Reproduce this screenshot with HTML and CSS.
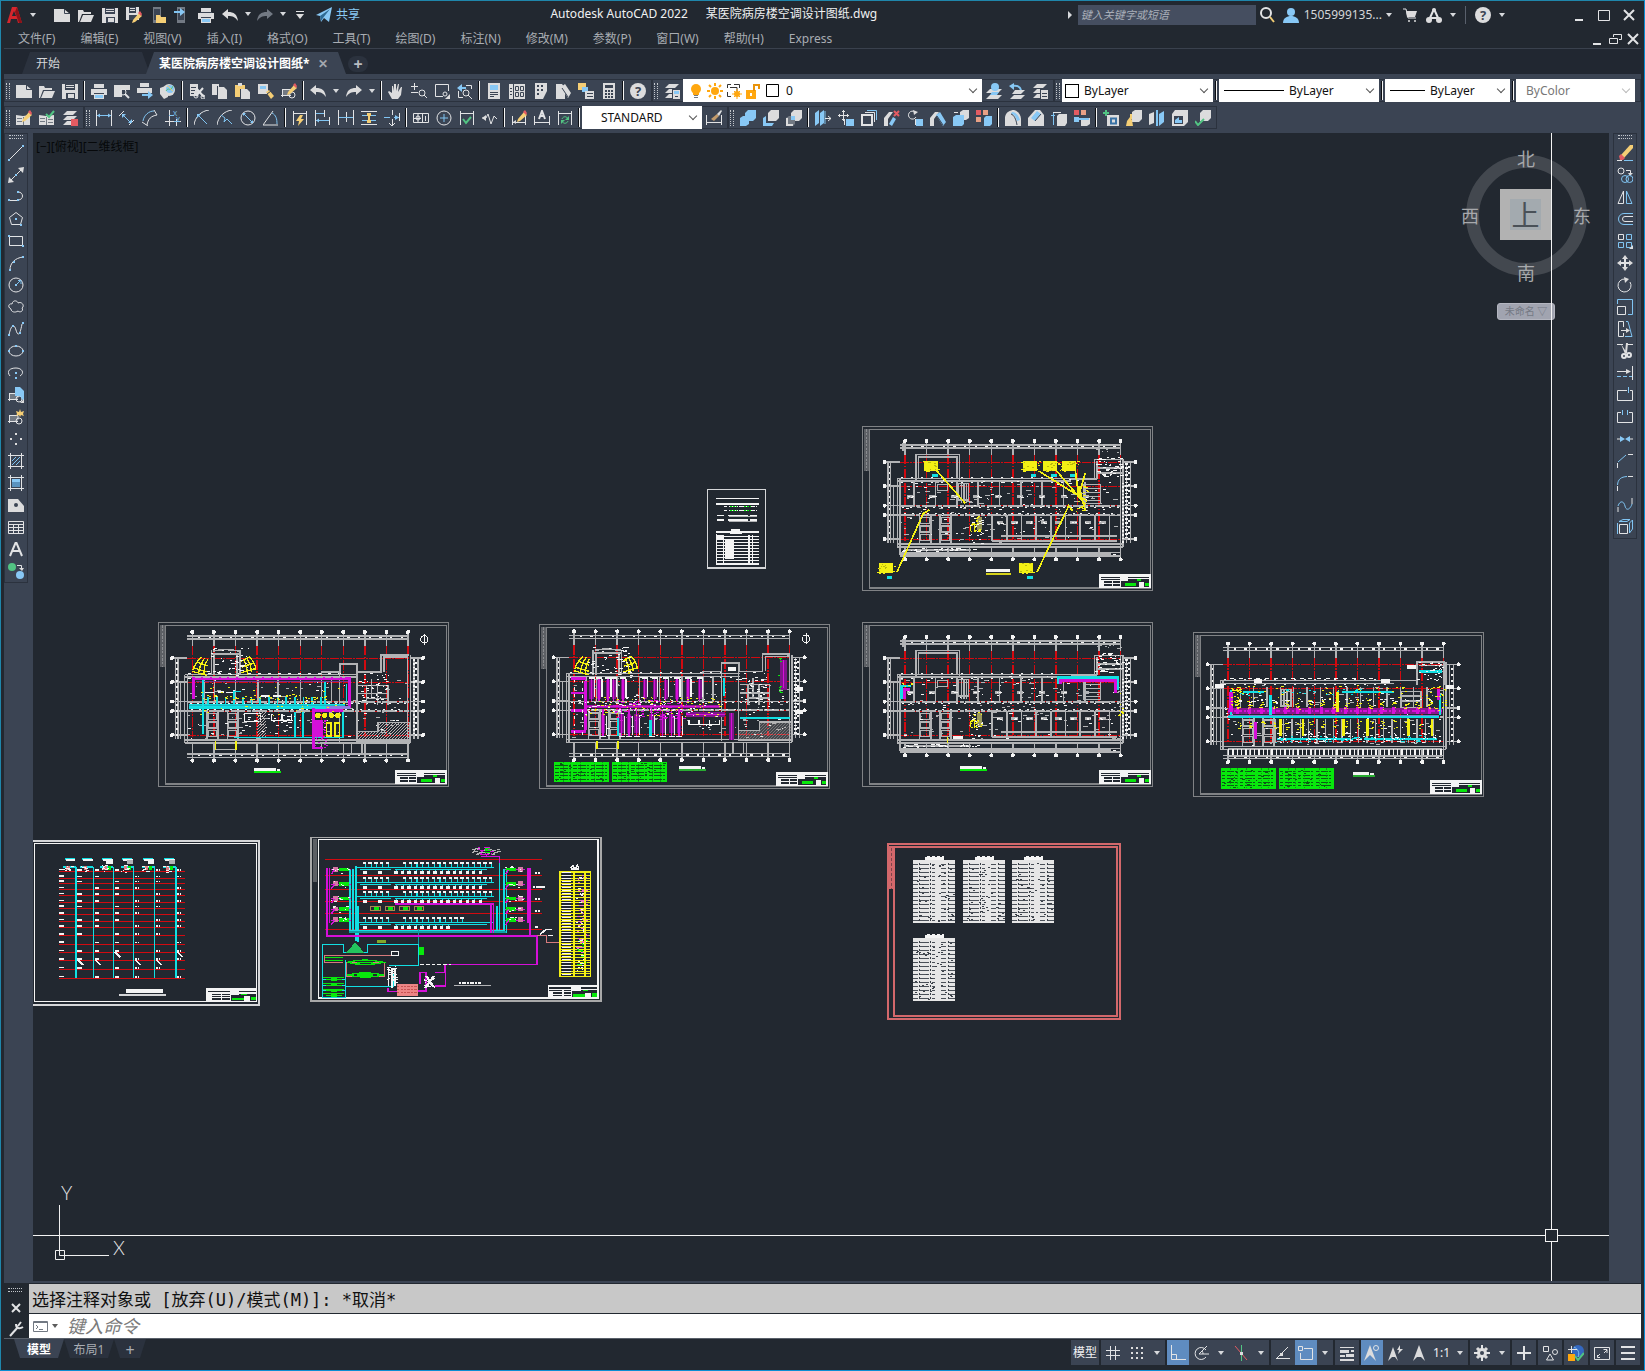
FILE: index.html
```html
<!DOCTYPE html>
<html lang="zh">
<head>
  <meta charset="UTF-8">
  <meta name="viewport" content="width=device-width, initial-scale=1.0">
  <title>Autodesk AutoCAD 2022</title>
  <link rel="stylesheet" href="styles.css">
</head>
<body>
  <div class="window">
    <header class="titlebar">
      <button class="logo" aria-label="应用程序菜单" data-icon="logo"></button>
      <button class="drop" aria-label="展开应用程序菜单"></button>
      <div class="quick" data-tools="quick"></div>
      <button class="share"><span data-icon="plane"></span>共享</button>
      <h1 class="title"><span>Autodesk AutoCAD 2022</span><span>某医院病房楼空调设计图纸.dwg</span></h1>
      <div class="account">
        <span class="play"></span>
        <input class="search" type="text" aria-label="搜索" placeholder="键入关键字或短语">
        <button class="icon-btn" aria-label="查找" data-icon="search"></button>
        <button class="user"><span data-icon="user"></span>1505999135...</button>
        <button class="drop" aria-label="帐户"></button>
        <button class="icon-btn" aria-label="购物车" data-icon="cart"></button>
        <button class="icon-btn" aria-label="应用" data-icon="apps"></button>
        <button class="drop" aria-label="更多应用"></button>
        <span class="rule"></span>
        <button class="icon-btn" aria-label="帮助" data-icon="help"></button>
        <button class="drop" aria-label="更多帮助"></button>
      </div>
      <div class="win-btns">
        <button aria-label="最小化" data-icon="min"></button>
        <button aria-label="最大化" data-icon="max"></button>
        <button aria-label="关闭" data-icon="close"></button>
      </div>
    </header>

    <nav class="menubar">
      <a href="#">文件(F)</a>
      <a href="#">编辑(E)</a>
      <a href="#">视图(V)</a>
      <a href="#">插入(I)</a>
      <a href="#">格式(O)</a>
      <a href="#">工具(T)</a>
      <a href="#">绘图(D)</a>
      <a href="#">标注(N)</a>
      <a href="#">修改(M)</a>
      <a href="#">参数(P)</a>
      <a href="#">窗口(W)</a>
      <a href="#">帮助(H)</a>
      <a href="#">Express</a>
      <div class="doc-btns">
        <button aria-label="最小化图形" data-icon="min"></button>
        <button aria-label="还原图形" data-icon="restore"></button>
        <button aria-label="关闭图形" data-icon="close"></button>
      </div>
    </nav>

    <div class="file-tabs">
      <button class="file-tab">开始</button>
      <div class="file-tab active">
        <button class="tab-name">某医院病房楼空调设计图纸*</button>
        <button class="tab-close" aria-label="关闭选项卡">✕</button>
      </div>
      <button class="tab-add" aria-label="新图形">+</button>
    </div>

    <div class="toolbars">
      <div class="tool-row">
        <div class="bar" data-tools="standard"></div>
        <div class="bar">
          <span class="grip"></span>
          <button class="tool" aria-label="图层特性" data-icon="layerprops"></button>
          <div class="combo layer">
            <span class="combo-pre" data-tools="layerstate"></span>
            <select aria-label="图层"><option>0</option></select>
          </div>
          <button class="tool" aria-label="置为当前" data-icon="layercur"></button>
          <button class="tool" aria-label="上一个图层" data-icon="layerprev"></button>
          <button class="tool" aria-label="图层状态" data-icon="layerlist"></button>
        </div>
        <div class="bar props">
          <span class="grip"></span>
          <div class="combo color">
            <span class="combo-pre"><i class="swatch"></i></span>
            <select aria-label="颜色"><option>ByLayer</option></select>
          </div>
          <span class="sep"></span>
          <div class="combo ltype">
            <span class="combo-pre"><i class="line"></i></span>
            <select aria-label="线型"><option>ByLayer</option></select>
          </div>
          <span class="sep"></span>
          <div class="combo lweight">
            <span class="combo-pre"><i class="line"></i></span>
            <select aria-label="线宽"><option>ByLayer</option></select>
          </div>
          <span class="sep"></span>
          <div class="combo plot">
            <select aria-label="打印样式" disabled><option>ByColor</option></select>
          </div>
        </div>
      </div>
      <div class="tool-row">
        <div class="bar" data-tools="refedit"></div>
        <div class="bar">
          <div class="group" data-tools="dimension"></div>
          <div class="combo dimstyle">
            <select aria-label="标注样式"><option>STANDARD</option></select>
          </div>
          <button class="tool" aria-label="标注样式管理" data-icon="dimstyle"></button>
        </div>
        <div class="bar" data-tools="solids"></div>
      </div>
    </div>

    <div class="workspace">
      <aside class="dock"><div class="bar vertical" data-tools="draw"></div></aside>
      <main class="canvas">
        <div class="view-label">[−][俯视][二维线框]</div>

        <svg class="sheet s-cover" id="cover" viewBox="0 0 177 241"></svg>
        <svg class="sheet s-roof" id="roof" viewBox="0 0 873 495"></svg>
        <svg class="sheet s-floor1" id="floor1" viewBox="0 0 873 495"></svg>
        <svg class="sheet s-floor2" id="floor2" viewBox="0 0 873 495"></svg>
        <svg class="sheet s-floor3" id="floor3" viewBox="0 0 873 495"></svg>
        <svg class="sheet s-floor4" id="floor4" viewBox="0 0 873 495"></svg>
        <svg class="sheet s-riser" id="riser" viewBox="34 43 593 498" preserveAspectRatio="none"></svg>
        <svg class="sheet s-system" id="system" viewBox="758 30 764 498" preserveAspectRatio="none"></svg>
        <svg class="sheet s-tables" id="tables" viewBox="0 0 234 177"></svg>

        <div class="viewcube">
          <div class="ring"></div>
          <button class="face">上</button>
          <span class="dir north">北</span>
          <span class="dir south">南</span>
          <span class="dir west">西</span>
          <span class="dir east">东</span>
          <button class="ucs-name">未命名 <span>▽</span></button>
        </div>

        <svg class="ucs" viewBox="0 0 80 80">
          <path class="ucs-line" d="M5.500 17V67.500H55M1.500 62.500h9v9h-9z"/>
          <text x="7" y="12">Y</text>
          <text x="59" y="67">X</text>
        </svg>

        <div class="cross-v"></div>
        <div class="cross-h"></div>
        <div class="pickbox"></div>
      </main>
      <aside class="dock right"><div class="bar vertical" data-tools="modify"></div></aside>
    </div>

    <div class="command">
      <div class="cmd-side">
        <span class="grip across"></span>
        <button aria-label="关闭命令行" data-icon="closesm"></button>
        <button aria-label="自定义" data-icon="wrench"></button>
      </div>
      <div class="cmd-main">
        <div class="cmd-history">选择注释对象或 [放弃(U)/模式(M)]: *取消*</div>
        <div class="cmd-line">
          <span class="cmd-prompt" data-icon="prompt"></span>
          <button class="drop" aria-label="最近使用的命令"></button>
          <input type="text" aria-label="命令" placeholder="键入命令">
        </div>
      </div>
    </div>

    <footer class="statusbar">
      <div class="layouts">
        <button class="layout active">模型</button>
        <button class="layout">布局1</button>
        <button class="layout add" aria-label="新建布局">+</button>
      </div>
      <div class="status" data-status></div>
    </footer>
  </div>
  <script src="script.js"></script>
</body>
</html>
```
FILE: styles.css
```css
* {
  box-sizing: border-box;
}

body {
  margin: 0;
  font-family: "Noto Sans", "Noto Sans CJK SC", sans-serif;
  font-size: 12px;
  line-height: 16px;
  color: #d4d6d9;
  background: #222830;
}

button,
input,
select {
  font: inherit;
  color: inherit;
  margin: 0;
  padding: 0;
  border: 0;
  background: none;
}

a {
  color: inherit;
  text-decoration: none;
}

svg {
  display: block;
}

.window {
  display: flex;
  flex-direction: column;
  height: 100vh;
  min-height: 700px;
  padding: 0 3px;
  border: 1px solid #1f86ab;
  border-right-color: #0b8ed3;
  border-bottom-color: #0b8ed3;
  background: #222830;
}

/* icon strokes and fills */
.w, .b, .g, .k, .r, .y, .s { fill: none; stroke-width: 1; }
.w { stroke: #e2e3e5; }
.b { stroke: #80c4f2; }
.g { stroke: #52c483; }
.k { stroke: #3b4453; }
.r { stroke: #e35b62; }
.y { stroke: #f2cd73; }
.s { stroke: #727983; }
.W { fill: #dcdcdd; }
.B { fill: #88c8f5; }
.G { fill: #52c483; }
.K { fill: #3b4453; }
.R { fill: #e35b62; }
.Y { fill: #f5ce75; }
.O { fill: #ffa70f; }
.S { fill: #727983; }
.t2 { stroke-width: 2; }

/* title bar */
.titlebar {
  display: flex;
  align-items: center;
  height: 27px;
  padding-left: 3px;
  flex: none;
}

.logo {
  width: 19px;
}

.drop {
  width: 14px;
  height: 20px;
  display: flex;
  align-items: center;
  justify-content: center;
}

.drop::after {
  content: "";
  border: 3px solid transparent;
  border-top: 4px solid #d7d9dc;
  border-bottom: 0;
}

.titlebar > .drop {
  margin-right: 10px;
}

.quick {
  display: flex;
}

.quick .tool {
  width: 24px;
}

.quick .drop {
  width: 11px;
}

.share {
  display: flex;
  align-items: center;
  gap: 4px;
  margin-left: 4px;
  color: #8acbf5;
}

.title {
  flex: 1;
  display: flex;
  justify-content: center;
  gap: 18px;
  margin: 0 0 1px;
  font-size: 12px;
  line-height: 16px;
  font-weight: normal;
  color: #f0f1f2;
}

.account {
  display: flex;
  align-items: center;
}

.play {
  border: 4px solid transparent;
  border-left-color: #d7d9dc;
  border-right: 0;
  margin-right: 6px;
}

.search {
  width: 178px;
  height: 20px;
  padding: 0 3px;
  font-size: 11px;
  font-style: italic;
  background: #454e60;
}

.search::placeholder {
  color: #a9afb9;
  opacity: 1;
}

.icon-btn {
  width: 24px;
  display: flex;
  justify-content: center;
}

.user {
  display: flex;
  align-items: center;
  gap: 5px;
  padding-left: 3px;
}

.user + .drop {
  margin-right: 2px;
}

.rule {
  width: 1px;
  height: 18px;
  margin: 0 5px;
  background: #59606c;
}

.win-btns {
  display: flex;
  gap: 9px;
  margin: 0 4px 0 62px;
}

/* menu */
.menubar {
  display: flex;
  align-items: center;
  gap: 25px;
  height: 21px;
  flex: none;
  padding: 1px 0 0 14px;
  color: #a9adb3;
  border-bottom: 1px solid #3a414d;
}

.doc-btns {
  display: flex;
  gap: 2px;
  margin: 0 0 0 auto;
}

/* drawing tabs */
.file-tabs {
  display: flex;
  align-items: flex-end;
  height: 25px;
  flex: none;
  padding-left: 18px;
  background: #212731;
}

.file-tab {
  display: flex;
  align-items: center;
  height: 22px;
  width: 128px;
  padding: 2px 0 0 14px;
  background: #2b323e;
  clip-path: polygon(8px 0, calc(100% - 8px) 0, 100% 100%, 0 100%);
  border-radius: 6px 6px 0 0;
  text-align: left;
}

.file-tab.active {
  width: 200px;
  padding-left: 13px;
  gap: 8px;
  margin-left: -4px;
  background: #3b4453;
  color: #fff;
}

.tab-name {
  font-weight: bold;
  white-space: nowrap;
}

.tab-close {
  color: #a4a8af;
  font-weight: bold;
}

.tab-add {
  width: 20px;
  height: 16px;
  margin: 0 0 2px 2px;
  border-radius: 8px;
  background: #2b323e;
  color: #b9bcc1;
  font-size: 16px;
  line-height: 16px;
  font-weight: bold;
}

/* toolbars */
.toolbars {
  display: flex;
  flex-direction: column;
  gap: 4px;
  flex: none;
  padding: 5px 0 4px;
  background: #3b4453;
}

.tool-row,
.bar,
.group {
  display: flex;
  align-items: center;
}

.bar {
  height: 23px;
  padding-right: 3px;
  box-shadow: inset 0 0 0 1px #2b323e;
}

.grip {
  width: 4px;
  height: 16px;
  margin: 0 2px;
  border: dotted #c3c7cc;
  border-width: 0 1px;
}

.tool {
  width: 23px;
  height: 22px;
  display: flex;
  align-items: center;
  justify-content: center;
  flex: none;
}

.bar .drop {
  width: 13px;
}

.sep {
  width: 2px;
  height: 19px;
  margin: 0 2px;
  border-left: 1px solid #0c0f14;
  border-right: 1px solid #f4f4f4;
}

.combo {
  position: relative;
  display: flex;
  height: 23px;
  color: #111;
  background: #fff;
}

.combo::after {
  content: "";
  position: absolute;
  right: 6px;
  top: 7px;
  width: 5px;
  height: 5px;
  border: solid #555;
  border-width: 0 1px 1px 0;
  transform: rotate(45deg);
}

.combo select {
  appearance: none;
  flex: 1;
  width: 100%;
  padding-left: 5px;
}

.combo-pre {
  display: flex;
  align-items: center;
  padding-left: 3px;
}

.combo-pre .tool {
  width: 19px;
}

.layer { width: 299px; }
.color { width: 151px; }
.ltype { width: 160px; }
.lweight { width: 125px; }
.plot { flex: 1; }
.dimstyle { width: 120px; }
.dimstyle select { padding-left: 19px; }
.plot select { padding-left: 10px; color: #777; opacity: 1; }
.plot::after { border-color: #bbb; }

.props {
  flex: 1;
  padding-right: 6px;
}

.swatch {
  width: 14px;
  height: 14px;
  border: 1px solid #000;
}

.line {
  width: 60px;
  height: 1px;
  margin-left: 2px;
  background: #000;
}

.lweight .line {
  width: 35px;
}

/* workspace */
.workspace {
  display: flex;
  flex: 1;
  min-height: 0;
  border-bottom: 2px solid #3b4453;
}

.dock {
  width: 29px;
  background: #3b4453;
  flex: none;
}

.dock.right {
  width: 32px;
  padding-left: 4px;
}

.bar.vertical {
  flex-direction: column;
  width: 24px;
  height: auto;
  padding: 2px 0 1px;
}

.grip.across,
.bar.vertical .grip {
  width: 14px;
  height: 4px;
  margin: 0 0 3px;
  border-width: 1px 0;
}

.canvas {
  position: relative;
  flex: 1;
  overflow: hidden;
  background: #222830;
}

.view-label {
  padding: 6px 3px;
  font-size: 12px;
  color: #06080a;
}

.sheet {
  position: absolute;
  width: 291px;
  height: 165px;
  shape-rendering: crispEdges;
}

.s-cover { left: 674px; top: 356px; width: 59px; height: 80px; }
.s-roof { left: 829px; top: 293px; }
.s-floor1 { left: 125px; top: 489px; }
.s-floor2 { left: 506px; top: 491px; }
.s-floor3 { left: 829px; top: 489px; }
.s-floor4 { left: 1160px; top: 499px; }
.s-riser { left: 0; top: 707px; width: 227px; height: 166px; }
.s-system { left: 277px; top: 703px; width: 292px; height: 166px; }
.s-tables { left: 854px; top: 710px; width: 234px; height: 177px; }

.viewcube {
  position: absolute;
  top: 17px;
  right: 18px;
  width: 130px;
  height: 175px;
  color: #a7a9ac;
  font-size: 18px;
}

.ring {
  position: absolute;
  left: 5px;
  top: 5px;
  width: 121px;
  height: 121px;
  border: 13px solid #43484f;
  border-radius: 50%;
}

.face {
  position: absolute;
  left: 39px;
  top: 39px;
  width: 51px;
  height: 51px;
  font-size: 28px;
  line-height: 30px;
  color: #4a5158;
  background: #a3aaaf;
  border: 10px solid #b2b2b2;
  display: flex;
  align-items: center;
  justify-content: center;
}

.dir {
  position: absolute;
  line-height: 20px;
}

.north { left: 56px; top: -1px; }
.south { left: 56px; top: 113px; }
.west { left: 0; top: 56px; }
.east { right: 0; top: 56px; }

.ucs-name {
  position: absolute;
  left: 36px;
  top: 153px;
  width: 58px;
  height: 17px;
  border-radius: 3px;
  font-size: 10px;
  line-height: 15px;
  color: #747984;
  background: #a1a4b0;
  border: 1px solid #b4b6c0;
}

.ucs {
  position: absolute;
  left: 21px;
  bottom: 13px;
  width: 80px;
  height: 80px;
  overflow: visible;
}

.ucs text {
  fill: #e6e7e8;
  font-family: Lato, sans-serif;
  font-weight: 300;
  font-size: 19px;
}

.ucs-line {
  fill: none;
  stroke: #f0f0f0;
}

.cross-v {
  position: absolute;
  right: 57px;
  top: 0;
  bottom: 0;
  width: 1px;
  background: #f4f4f4;
}

.cross-h {
  position: absolute;
  left: 0;
  right: 0;
  bottom: 45px;
  height: 1px;
  background: #f4f4f4;
}

.pickbox {
  position: absolute;
  right: 51px;
  bottom: 39px;
  width: 13px;
  height: 13px;
  border: 1px solid #f4f4f4;
  background: #222830;
}

/* command line */
.command {
  display: flex;
  flex: none;
  padding-top: 1px;
  border-bottom: 1px solid #59606a;
}

.cmd-side {
  display: flex;
  flex-direction: column;
  align-items: flex-start;
  justify-content: space-between;
  width: 25px;
  padding: 4px 3px 1px 4px;
}

.cmd-main {
  flex: 1;
}

.cmd-history {
  height: 29px;
  padding: 0 3px;
  font-family: "DejaVu Sans Mono", "Noto Sans CJK SC", monospace;
  font-size: 17px;
  line-height: 32px;
  color: #111;
  background: #c8c8c8;
}

.cmd-line {
  display: flex;
  align-items: center;
  height: 24px;
  margin-top: 1px;
  padding-left: 4px;
  background: #fff;
}

.cmd-line .drop {
  width: 12px;
}

.cmd-line .drop::after {
  border-top-color: #5c5c5c;
}

.cmd-line input {
  flex: 1;
  height: 24px;
  margin-left: 6px;
  font-size: 18px;
  font-style: italic;
  color: #111;
}

.cmd-line input::placeholder {
  color: #7b7b7b;
  opacity: 1;
}

/* status bar */
.statusbar {
  display: flex;
  justify-content: space-between;
  flex: none;
  height: 31px;
}

.layouts {
  display: flex;
  padding-left: 10px;
}

.layout {
  height: 19px;
  width: 50px;
  padding-top: 2px;
  background: #2b323e;
  color: #a9adb3;
  clip-path: polygon(0 0, 100% 0, calc(100% - 6px) 100%, 6px 100%);
}

.layout.active {
  background: #3b4453;
  color: #fff;
  font-weight: bold;
}

.layout.add {
  width: 32px;
  font-size: 16px;
  line-height: 16px;
}

.status {
  display: flex;
  align-items: flex-start;
  gap: 2px;
  padding: 1px 1px 0 0;
}

.cluster {
  display: flex;
  background: #3b4453;
}

.st {
  width: 24px;
  height: 25px;
  display: flex;
  align-items: center;
  justify-content: center;
  color: #f0f1f2;
}

.st.on {
  width: 22px;
  background: #5f8cc0;
}

.st.text {
  width: auto;
  padding: 0 2px;
}

.cluster .drop {
  width: 16px;
  height: 25px;
}
```
FILE: script.js
```js
// ---------- icons, 16x16 ----------
const p = c => d => `<path class="${c}" d="${d}"/>`;
const w = p('w'), b = p('b'), g = p('g'), k = p('k'), r = p('r'), y = p('y'), s = p('s');
const W = p('W'), B = p('B'), G = p('G'), K = p('K'), R = p('R'), Y = p('Y'), O = p('O'), S = p('S');
const w2 = p('w t2'), b2 = p('b t2'), g2 = p('g t2'), r2 = p('r t2'), y2 = p('y t2');
const disc = (c, x, y, rad) => `<circle class="${c}" cx="${x}" cy="${y}" r="${rad}"/>`;

const pencil = Y('M7 9L13 2l3 3-7 6-3 1z') + R('M12 2l2-2 2 3-1 2z');
const layers = W('M5 1h10l-4 4H1zM5 6h10l-4 4H1zM5 11h10l-4 4H1z');
const page = S('M3 0h8v16H3z') + K('M4 2h6v11H4z');
const block = S('M1 6h9v7H1z') + w('M1.500 6v8M0 12.500h10M1 6.500h9v4') + disc('w', 11, 12, 3);
const cubeW = W('M5 3l3-3h8v8l-3 3H5z');
const slice = W('M0 16V8l5-6h4l-5 7v7z');
const dimBox = w('M1.500 1v14M14.500 1v14M2 3.500h12');

const icons = {
  logo: '<path fill="#d6262d" d="M0 16L5 0h5l5 16h-4l-1-4H4l-1 4z"/><path fill="#222830" d="M7 4l2 5H5z"/><path fill="#8d1218" d="M10 0l5 16h-3L8 5z"/>',
  plane: B('M0 8L16 0l-3 15-5-4-3 4-1-6z') + '<path d="M4 9l10-7-7 9-2 3z" fill="#2f6a93"/>',
  new: W('M0 2h10l6 5v8H0z') + k('M10.500 2v4.500H16'),
  open: W('M0 15V3h5l1 2h7v2H4l-3 8z') + W('M5 8h11l-3 7H2z'),
  save: W('M0 1h16v15H0z') + K('M3 1h10v6H3zM4 10h9v6H4z') + W('M4 2h8v1H4zM4 4h8v1H4zM6 11h6v4H6z'),
  saveas: W('M0 0h13v13H0z') + K('M3 0h7v6H3zM3 8h8v5H3z') + W('M4 1h5v1H4zM4 3h5v1H4z') + '<g transform="translate(0 4)">' + pencil + '</g>',
  openweb: page + Y('M6 8h4l1 2h5v6H6z'),
  saveweb: page + b2('M0 5h8') + B('M6 1l5 4-5 4z'),
  print: W('M3 1h10v4H3zM0 6h16v6H0zM3 11h10v5H3z') + K('M2 5h12v1H2zM3 10h10v1H3z') + B('M4 12h8v3H4z'),
  undo: W('M0 7l6-5v3c6 0 9 2 10 9-3-4-5-5-10-5v3z'),
  redo: W('M16 7l-6-5v3C4 5 1 7 0 14c3-4 5-5 10-5v3z'),
  redodim: S('M16 7l-6-5v3C4 5 1 7 0 14c3-4 5-5 10-5v3z'),
  custom: w('M4 4.500h8') + W('M4 7h8l-4 5z'),
  search: disc('w t2', 6, 6, 5) + y2('M10 10l4 5'),
  user: disc('B', 8, 5, 4) + B('M0 16c0-5 4-7 8-7s8 2 8 7z'),
  cart: w('M1 2h3l2 9h8') + W('M4 4h11l-2 6H5z') + disc('W', 7, 14, 1) + disc('W', 13, 14, 1),
  apps: w2('M8 2L3 13M8 2l5 11M4 11h8') + disc('W', 8, 3, 2) + disc('W', 3, 13, 3) + disc('W', 13, 13, 3),
  help: disc('W', 8, 8, 8) + '<text x="8" y="13" text-anchor="middle" font-size="13" font-weight="bold" fill="#3b4453">?</text>',
  min: w2('M4 13h8'),
  max: w('M2.500 3.500h11v10h-11z'),
  restore: w('M2.500 7.500h8v5h-8zM6.500 6V3.500h8v5H12'),
  close: w2('M3 3l10 10M13 3L3 13'),
  closesm: w2('M4 4l8 8M12 4l-8 8'),
  wrench: w2('M2 15l8-9') + w2('M8 3c0 5 4 5 7 3M10 5l3-4'),
  prompt: s('M.5 3.500h14v10H.5z') + s('M.5 4.500h14M3 7l2 2-2 2M6 11.500h4'),
  preview: W('M0 2h16v5H8v7H0z') + disc('w', 9, 9, 3) + w2('M11 11l4 4'),
  publish: W('M3 0h9v4H3zM0 5h15v5H0z') + b2('M5 12h8') + B('M11 8l5 4-5 4z'),
  globe: W('M0 5l8-3v12l-4 2-4-5z') + disc('W', 9, 7, 6) + disc('B', 10, 6, 4) + g('M6 8c3-5 4 2 7-5') + y('M7 3c3 0 3 4 6 5'),
  cut: W('M1 1h8v12H1z') + k('M2 4.500h5M2 7.500h4M2 10.500h3') + w2('M7 5l8 9M14 5l-7 8') + disc('w', 7, 13, 2) + disc('w', 14, 14, 2),
  copy: W('M0 1h7v11H0z') + k('M5.500 14V3') + W('M6 4h6l3 3v9H6z'),
  paste: Y('M0 2h10v12H0z') + W('M3 0h4v3H3zM6 6h6l3 3v7H6z') + k('M5.500 6v8'),
  match: W('M0 1h10v10H0z') + B('M2 3h6v3H2z') + Y('M8 9l3-2 5 6-3 3z') + k('M9 11l4-3'),
  blockedit: block + pencil,
  pan: W('M4 16L0 9l1-1 3 2V3h1l1 5V1h2v7l2-7h1l-1 8 3-5h1l-1 8-3 4z'),
  zoomrt: w('M3.500 0v7M0 3.500h7M0 9.500h7') + disc('w', 11, 10, 3) + w('M13 12l3 3'),
  zoomwin: w('M9 13.500H1.500v-12h13V8') + disc('w', 11, 11, 2) + W('M16 11v5h-5z'),
  zoomprev: w('M1.500 8v6.500H6M9 2.500h5.500V6') + b2('M2 5h7') + B('M5 1L0 5l5 4z') + disc('w', 9, 10, 3) + w('M11 12l4 4'),
  props: W('M2 0h12v16H2z') + B('M4 2h8v5H4z') + k('M4 9.500h8M4 11.500h8M4 13.500h4'),
  design: W('M0 1h16v15H0z') + k('M4.500 1v15M1 5.500h2M1 8.500h2M1 11.500h2') + k('M6.500 3.500h3v4h-3zM11.500 3.500h3v4h-3zM6.500 9.500h3v4h-3zM11.500 9.500h3v4h-3z'),
  palettes: W('M3 0h12v8l-4 8H3z') + K('M5 2h2v2H5zM9 2h2v2H9zM5 6h2v2H5zM9 6h2v2H9zM5 10h2v2H5z'),
  sheetset: W('M1 1h6l3 4v11H1z') + W('M6 4l4-3 6 9-3 5z') + k('M7 5l6 9'),
  markup: Y('M0 0h8v7H0z') + B('M4 4h6v5H4z') + W('M7 8h9v8H7z') + k('M9 10.500h6M9 13.500h6'),
  calc: W('M2 0h12v16H2z') + K('M4 2h8v3H4zM4 7h2v2H4zM7 7h2v2H7zM10 7h2v2h-2zM4 10h2v2H4zM7 10h2v2H7zM10 10h2v2h-2zM4 13h2v2H4zM7 13h2v2H7zM10 13h2v2h-2z'),
  layerprops: layers + K('M8 6h8v10H8z') + W('M9 7h7v9H9z') + B('M10 8h5v3h-5z') + k('M11 13.500h3'),
  layercur: W('M4 6h12l-4 4H0zM4 12h12l-4 4H0z') + disc('B', 9, 4, 4) + B('M6 9h7l-2 3H4z'),
  layerprev: W('M6 7h10l-4 4H3zM5 12h11l-4 4H1z') + b2('M3 3c4-1 8 0 9 4') + B('M5 0L0 3l5 4z'),
  layerlist: layers + K('M8 6h8v10H8z') + W('M9 7h7v9H9z') + k('M10 10.500h5M10 13.500h5'),
  bulb: disc('O', 8, 6, 5) + O('M5 9h6v3H5z') + s('M6 12.500h4M6 14.500h4'),
  sun: disc('O', 8, 8, 4) + '<path stroke="#ffa70f" stroke-width="2" d="M8 0v3M8 13v3M0 8h3M13 8h3M2 2l2 2M12 12l2 2M2 14l2-2M12 4l2-2"/>',
  vpsun: '<path fill="none" stroke="#333" d="M1.500 5V1.500H5M8 1.500h5.500V5M1.500 9v4.500H5M4 4.500h7v5"/>' + disc('O', 11, 11, 3) + '<path stroke="#ffa70f" d="M11 6v10M6 11h10M8 8l6 6M8 14l6-6"/>',
  lock: O('M1 7h10v9H1z') + '<path fill="none" stroke="#e9930a" stroke-width="2" d="M9 8V2h5v4"/>' + '<path fill="#fff" d="M5 10h2v3H5z"/>',
  black: '<path fill="#fff" stroke="#000" d="M2.500 1.500h12v12h-12z"/>',
  refedit: W('M0 5l7 1 7-1v10H0z') + s('M1 8.500h5M1 11.500h5M7.500 7v8') + pencil,
  refsave: W('M0 5l7 1 8-1v10H0z') + s('M1 8.500h5M1 11.500h5M7.500 7v8M9 9.500h5M9 12.500h5') + g2('M7 4l3 3 5-6'),
  refset: layers + R('M9 9h7v7H9z'),
  linear: w('M.5 0v16M15.500 0v16') + b('M1 5.500h14') + B('M1 5.500l3-2v4zM15 5.500l-3-2v4z'),
  aligned: w('M0 6l5-5M10 15l5-5') + b('M3 4l9 9') + B('M3 4h4L3 8zM13 13H9l4-4z'),
  arclen: b('M1 11C2 5 7 1 12 1') + w('M0 12l6 4M12 0l3 5M5 15c1-6 4-9 10-10'),
  ordinate: w('M4.500 0v16M11.500 9v7M0 11.500h16') + b('M4 5.500h5M9 11.500h6') + '<text x="8" y="6" font-size="7" fill="#80c4f2">X</text><text x="11" y="12" font-size="7" fill="#80c4f2">Y</text>',
  radius: w('M0 15C1 7 7 1 15 0') + b('M3 4l10 10') + B('M3 4h4L3 8z'),
  jogged: w('M0 15C1 7 7 1 15 0') + b('M4 5l4 3-1 4 3-3 5 5'),
  diameter: disc('w', 8, 8, 7) + b('M3 3l10 10') + B('M3 3h3L3 6zM13 13h-3l3-3z'),
  angular: w('M10 1L0 15h15') + b('M9 3c4 2 5 6 5 11'),
  qdim: dimBox + Y('M8 5L4 11h3l-1 5 6-7H9l2-4z'),
  baseline: w('M.5 0v16M9.500 0v7M14.500 7v8') + b('M1 3.500h8M1 10.500h13') + B('M1 10.500l3-2v4z'),
  continue: w('M.5 0v15M8.500 2v10M15.500 0v15') + b('M1 7.500h14'),
  dimspace: w('M0 1.500h16M0 14.500h16') + b('M1 5.500h14M1 10.500h14') + Y('M6 3h4v3H9v4h1v3H6v-3h1V6H6z'),
  dimbreak: w('M8.500 0v5M8.500 9v7M15.500 3v8M5 13l3 3 3-3') + b('M0 7.500h6M10 7.500h5') + B('M11 5l4 2.500-4 2.500z'),
  tol: w('M.5 3.500h15v9H.5zM9.500 4v8') + disc('w', 5, 8, 2) + w('M1 8.500h7M5 4v8M12.500 6v5'),
  center: disc('w', 8, 8, 7) + b('M8 4v8M4 8h8'),
  inspect: dimBox + g2('M4 9l3 4 5-6'),
  jogline: w('M0 8h4l2-4 3 10 3-8 3 3') + W('M0 8l4-3v6z'),
  dimedit: w('M1.500 6v9M14.500 6v9M2 12.500h12') + W('M2 12l3-2v4z') + pencil,
  dimtedit: w('M.5 6v9M15.500 6v9M1 12.500h14') + w2('M5 9l3-8 3 8M6 6h4'),
  dimupdate: dimBox + g('M5 9c1-3 5-3 6 0M11 11c-1 3-5 3-6 0') + G('M12 6v4H8zM4 14v-4h4z'),
  dimstyle: w('M.5 5v10M15.500 5v10M1 12.500h14') + '<path fill="#c19a6b" d="M5 9l6-5 2 2-5 5z"/>' + W('M11 4l4-4 1 1-3 5z'),
  union: B('M0 8l3-2h2V3l3-3h8v8l-3 3H9v3l-3 2H0z'),
  subtract: W('M5 3l3-3h8v8l-3 3H5z') + B('M0 8l3-2v7h8l-2 3H0z'),
  intersect: cubeW + S('M0 8l3-2h6v8l-2 2H0z') + W('M0 8h2v6h5v2H0z') + B('M5 6h4v4H5z'),
  extrude: B('M0 3l4-3v13l-4 3zM5 3l4-3v13l-4 3z') + b('M10 1v13') + w('M10 8.500h6M13 6l3 2.500-3 2.500'),
  moveface: w('M5.500 0v11M0 5.500h11M4 1.500h3M4 9.500h3M1.500 4v3M9.500 4v3') + B('M8 9h8v7H8z') + w('M6.500 15v-5'),
  offsetface: w2('M1 5h10v10H1z') + w('M4 2.500h9.500V12') + b('M6 .5h9.500V10'),
  delface: slice + B('M5 14l4-7 3 2-4 7z') + r2('M10 1l5 5M15 1l-5 5'),
  rotface: w('M8 2a4 4 0 1 0 1 5') + W('M6 0l5 2-4 3z') + B('M9 9h7v7H9z') + w('M8.500 9v6'),
  taper: slice + B('M6 5l4-3 6 10-3 4z') + k('M7 6l6 9'),
  copyface: B('M0 7l3-2h8v9l-2 2H0z') + W('M7 2l3-2h6v8l-3 2h-2V5H7z') + w('M1 2.500h4'),
  colorface: R('M0 0h5v5H0z') + '<path fill="#e9a085" d="M7 0h5v5H7zM0 7h5v5H0z"/>' + B('M8 8l2-2h6v8l-2 2H8z'),
  fillet3d: W('M0 16V7c1-5 5-7 9-7 4 1 7 5 7 9v7z') + B('M7 2c4 0 7 4 8 8l-3 1C11 7 9 4 6 4z') + k('M6 4c3 1 5 5 6 11'),
  chamfer3d: W('M0 16V8l7-8h5l4 5v11z') + B('M3 8l6-7 4 3-6 7z') + k('M7 11l6-7'),
  edgecopy: W('M6 6l2-2h8v9l-2 3H6z') + b('M2.500 3v12M0 5.500h4') + w('M2 2.500h8'),
  edgecolor: R('M0 0h5v5H0z') + '<path fill="#e9a085" d="M7 0h5v5H7z"/>' + B('M0 7h5v5H0z') + W('M7 8h9v6l-3 2H7z') + b2('M5 9h10'),
  imprint: g2('M3 0v6M0 3h6') + W('M4 5h12v11H4z') + '<path fill="none" stroke="#3a73a6" stroke-width="2" d="M8 8.500h5v5H8z"/>',
  clean: W('M6 2l3-2h7v9l-3 3H6z') + Y('M4 7l2 3 1 6H0l1-5z') + y2('M5 9V4'),
  separate: W('M0 4l5-2v11l-5 2z') + B('M10 4l5-3v11l-5 4z') + b2('M8 0v16'),
  shell: W('M0 4l3-4h13v12l-4 4H0z') + K('M2 6h9v8H2z') + B('M3 10l4-3v3h3v3H3z'),
  check: cubeW + g2('M0 11l3 4 6-6'),
  // draw
  line: w('M2 14L14 2') + B('M0 14h2v2H0zM14 0h2v2h-2z'),
  xline: w('M3 13L13 3') + W('M0 16l1-6 5 5zM16 0l-1 6-5-5z') + B('M7 7h2v2H7z'),
  pline: w('M1 11.500h8M10 3c6 0 6 8 0 8') + B('M0 10h2v2H0zM9 10h2v2H9zM9 2h2v2H9z'),
  polygon: w('M8 1.500l6.500 5-2 7h-9l-2-7z') + B('M7 7h2v2H7zM12 13h2v2h-2z'),
  rect: w('M1.500 3.500h13v9h-13z') + B('M0 2h2v2H0zM14 12h2v2h-2z'),
  arc: w('M2 15C2 8 7 3 15 2') + B('M1 14h2v2H1zM5 6h2v2H5zM14 1h2v2h-2z'),
  circle: disc('w', 8, 8, 7) + B('M7 7h2v2H7z') + b('M9 7l4-4M10 3.500h3V7'),
  cloud: w('M3 10c-4-2-2-6 1-5 1-5 6-3 6-1 4-2 7 3 4 5 2 3-2 5-4 3-3 2-7 1-7-2z'),
  spline: w('M1 14C3 4 6 2 8 9s4 5 6-6') + B('M0 13h2v2H0zM4 4h2v2H4zM11 11h2v2h-2zM14 1h2v2h-2z'),
  ellipse: '<ellipse class="w" cx="8" cy="8" rx="7" ry="5"/>' + B('M7 2h2v2H7zM0 7h2v2H0zM14 7h2v2h-2z'),
  earc: w('M2 11c-4-5 0-8 6-8s9 5 4 8') + B('M7 7h2v2H7zM7 12h2v2H7z'),
  insblock: block + B('M7 0h5l4 4v11l-4-6H7z') + W('M16 12v4h-4z'),
  mkblock: block + Y('M12 0l1 3 3-1-1 3 1 2-3-1-1 2-1-2-3 1 1-2-1-3 3 1z'),
  point: W('M7 2h2v2H7zM2 7h2v2H2zM12 7h2v2h-2zM7 12h2v2H7z'),
  hatch: w('M2.500 0v16M13.500 0v16M0 2.500h16M0 13.500h16') + b('M4 8l4-4M4 12l8-8M8 12l4-4'),
  gradient: '<path fill="#5b93bf" d="M4 4h8v8H4z"/><path fill="#88c8f5" d="M4 4h8v3H4z"/>' + w('M2.500 0v16M13.500 0v16M0 2.500h16M0 13.500h16'),
  region: W('M0 2h10l6 7v6H0z') + disc('K', 8, 8, 2),
  table: w('M.5 2.500h15v12H.5zM1 5.500h14M1 8.500h14M1 11.500h14M5.500 6v8M10.500 6v8'),
  mtext: w2('M2 15L7.500 2h1L14 15M4 10h8'),
  addsel: disc('G', 4, 4, 4) + disc('B', 12, 12, 4) + w('M9 2.500h4.500V6') + W('M11 5h5l-2 3z'),
  // modify
  erase: w('M0 15.500h5') + b('M7 15.500h9') + Y('M4 10l9-10h3v3L7 13z') + R('M2 11l2-2 4 4-2 2-3 0z'),
  mcopy: disc('w', 4, 4, 3) + w('M9 3.500h4.500V7') + W('M11 6h5l-3 3z') + disc('b', 8, 12, 3.500) + disc('b', 12.500, 12, 3.500),
  mirror: w('M6.500 2v12.500H1z') + b('M9.500 2v12.500H15z'),
  offset: b('M16 2.500H7a5.500 5.500 0 0 0 0 11h9') + w('M16 5.500H8a2.500 2.500 0 0 0 0 5h8'),
  array: w('M1.500 1.500h5v5h-5z') + b('M9.500 1.500h5v5h-5zM1.500 9.500h5v5h-5zM9.500 9.500h5v5h-5z') + W('M16 12v4h-4z'),
  move: w2('M8 2v12M2 8h12') + W('M8 0l3 4H5zM8 16l3-4H5zM0 8l4-3v6zM16 8l-4-3v6z'),
  rotate: w('M13 5a6.500 6.500 0 1 1-5-3') + W('M7 0l5 2-4 4z'),
  scale: w('M.5 7.500h8v8h-8z') + b('M.5 5V.500h15v15H11'),
  stretch: w('M6.500 6V.500h-5v15h5V12M4 9.500h6') + W('M9 7l4 2.500L9 12z') + b('M9 .5h2l4 15H8'),
  trim: w('M0 1.500h6M10 1.500h6') + W('M4 1l6 9-2 1zM9 0h2l-1 10H8z') + disc('w t2', 7, 13, 2) + disc('w t2', 12, 12, 2),
  extend: w('M15.500 1v14M0 6.500h10') + W('M9 4l5 2.500L9 9z') + b('M0 11.500h4M6 11.500h4M12 11.500h3'),
  breakpt: w('M10 3.500H.5v10h15v-10H13') + b('M11.500 0v6'),
  break: w('M4 3.500H.5v10h15v-10H12') + b('M5.500 1v5M10.500 1v5'),
  join: w('M0 8h3M13 8h3') + B('M3 5l5 3-5 3zM13 5L8 8l5 3z'),
  chamfer: w('M.5 15v-5M11 1.500h5') + b('M1 9l8-7'),
  fillet: w('M.5 16v-5M11 1.500h5') + b('M.5 10C1 4 4 2 10 1.500'),
  blend: w('M1 15V10M15 1v6') + b('M1 9c2-6 6-5 7 0s5 4 7-2'),
  explode: w('M2.500 5.500h8v9h-8z') + b('M.5 4v11M2 2.500h8l3-2H6zM12.500 4l3-3v9l-3 4z'),
  // status bar
  grid: w('M5.500 1v14M10.500 1v14M1 5.500h14M1 10.500h14'),
  snap: W('M2 2h2v2H2zM7 2h2v2H7zM12 2h2v2h-2zM2 7h2v2H2zM7 7h2v2H7zM12 7h2v2h-2zM2 12h2v2H2zM7 12h2v2H7zM12 12h2v2h-2z'),
  ortho: w('M1.500 0v14.500H16M1.500 9.500h5v5'),
  polar: w('M13 5A6 6 0 1 0 13 12M6 9h10M6 9l8-8') + w('M10 9a4 4 0 0 0-1-3'),
  iso: g('M8.500 0v16') + r('M2 1l12 14') + W('M7 7h3v3H7z'),
  otrack: w('M2 13L13 2M1 13.500h14') + W('M5 8h3v3H5z'),
  osnap: w('M6 3.500h8.500v11h-12V8M.5 1.500h4v4h-4z'),
  lwt: W('M1 2h14v1H1zM1 5h9v3H1zM12 5h3v2h-3zM1 10h5v2H1zM7 9h8v3H7zM1 14h14v2H1z'),
  annovis: W('M6 0l6 16-4-4-2-2-2 2-4 4z') + disc('w', 12, 3, 2.500),
  annoauto: W('M6 2l5 14-3-4H5l-4 4z') + W('M13 0l-3 5h2l-1 4 5-5h-3z'),
  anno: W('M8 0l6 16-4-4H6l-4 4z'),
  gear: disc('W', 8, 8, 5) + w2('M8 0v16M0 8h16') + '<path stroke="#dcdcdd" stroke-width="3" d="M3 3l10 10M13 3L3 13"/>' + disc('K', 8, 8, 2),
  plus: w2('M8 1v14M1 8h14'),
  units: w('M1.500 1.500h5v5h-5zM8 9l3.500 6H4.500z') + disc('w', 13, 7, 2.500),
  hardware: '<circle fill="#3468c0" cx="10" cy="6" r="6"/>' + b('M6 2c4 2 6 6 4 10') + w('M0 4.500h9M3.500 1v7') + O('M0 9h7v7H0z') + g2('M7 11l3 4 6-7'),
  fullscreen: w('M.5 2.500h15v12H.5z') + w('M3 12l3-3M10 8l3-3M9.500 4.500H13V8M6 12.500H3.500V10'),
  burger: w2('M1 2h14M1 8h14M1 14h14')
};

const svg = name => `<svg width="16" height="16" viewBox="0 0 16 16">${icons[name]}</svg>`;
const tool = name => `<button class="tool" aria-label="${name}">${svg(name)}</button>`;

// "|" is a separator, "v" a small drop-down arrow, ":" the drag grip
const bars = {
  quick: 'new open save saveas openweb saveweb print undo v redodim v custom',
  standard: ': new open save | print preview publish globe | cut copy paste match blockedit | undo v redo v | pan zoomrt zoomwin zoomprev | props design palettes sheetset markup calc | help',
  layerstate: 'bulb sun vpsun lock black',
  refedit: ': refedit refsave refset',
  dimension: ': linear aligned arclen ordinate | radius jogged diameter angular | qdim baseline continue dimspace dimbreak | tol center inspect jogline | dimedit dimtedit dimupdate |',
  solids: ': union subtract intersect | extrude moveface offsetface delface rotface taper copyface colorface | fillet3d chamfer3d edgecopy edgecolor | imprint clean separate shell check',
  draw: ': line xline pline polygon rect arc circle cloud spline ellipse earc insblock mkblock point hatch gradient region table mtext addsel',
  modify: ': erase mcopy mirror offset array move rotate scale stretch trim extend breakpt break join chamfer fillet blend explode'
};

const marks = {
  '|': '<span class="sep"></span>',
  ':': '<span class="grip"></span>',
  'v': '<button class="drop" aria-label="展开"></button>'
};

document.querySelectorAll('[data-icon]').forEach(el => {
  el.innerHTML = svg(el.dataset.icon);
});
document.querySelectorAll('[data-tools]').forEach(el => {
  el.innerHTML = bars[el.dataset.tools].split(' ').map(n => marks[n] || tool(n)).join('');
});

// "*" marks a switched-on mode, "=" a text button
const status = ['=模型', 'grid snap v', '*ortho polar v iso v', 'otrack *osnap v', 'lwt',
  '*annovis annoauto anno =1:1 v', 'gear v', 'plus', 'units', 'hardware', 'fullscreen', 'burger'];
document.querySelector('[data-status]').innerHTML = status.map(c =>
  '<div class="cluster">' + c.split(' ').map(n => {
    if (marks[n]) return marks[n];
    if (n[0] === '=') return `<button class="st text">${n.slice(1)}</button>`;
    if (n[0] === '*') return `<button class="st on" aria-label="${n.slice(1)}">${svg(n.slice(1))}</button>`;
    return `<button class="st" aria-label="${n}">${svg(n)}</button>`;
  }).join('') + '</div>').join('');

// ---------- drawing sheets ----------
const GRAY = '#b2b3b5', RED = '#d20a10', CY = '#12dfe3', MG = '#d510d8', YE = '#f3f014', GN = '#08e80c', WH = '#f4f4f4';
const FRAME = '#808285', STRIP = '#5d6065';

const ln = (c, d, sw = 3, dash = '') =>
  `<path fill="none" stroke="${c}" stroke-width="${sw}" ${dash ? `stroke-dasharray="${dash}"` : ''} d="${d}"/>`;
const bx = (c, x, y, bw, bh) => `<rect fill="${c}" x="${x}" y="${y}" width="${bw}" height="${bh}"/>`;
const fr = (c, x, y, bw, bh, sw = 3) => ln(c, `M${x} ${y}h${bw}v${bh}h${-bw}z`, sw);
const range = (n, f) => Array.from({ length: n }, (_, i) => f(i)).join('');
const each = (list, f) => list.map(f).join('');

let seed = 7;
const rnd = () => (seed = (seed * 16807) % 2147483647) / 2147483647;
const noise = (c, n, x, y, bw, bh, s = 5) =>
  range(n, () => bx(c, Math.round(x + rnd() * bw), Math.round(y + rnd() * bh), 3 + Math.round(rnd() * s), 3));
const shift = (x, y, body) => `<g transform="translate(${x} ${y})">${body}</g>`;

const col = i => 103 + 64.7 * i;
const rows = [108, 180, 239, 267, 339];

function frame() {
  return fr(FRAME, 2, 2, 869, 491, 4) + fr(FRAME, 23, 11, 842, 475, 4) + bx(STRIP, 5, 8, 16, 127) +
    ln('#8a8c90', 'M13 10v124', 4, '7 4');
}

function titleBlock(x, y, len = 150) {
  return fr(WH, x, y, len, 38, 4) + ln(WH, `M${x} ${y + 4}h${len}M${x} ${y + 12}h${len}`, 4) +
    ln(WH, `M${x + 12} ${y + 18}h48M${x + 12} ${y + 26}h48M${x + 12} ${y + 34}h48M${x + 60} ${y}v38M${x + 80} ${y + 5}v12M${x + 38} ${y + 15}v23`, 3) +
    bx(WH, x, y + 16, 12, 22) + bx(GN, x + len / 2, y + 26, 34, 8) + bx(GN, x + len - 40, y + 14, 14, 4) +
    bx(WH, x + len - 34, y + 22, 16, 14) + bx(GN, x + len - 14, y + 24, 12, 10) + bx(WH, x + 62, y + 4, 22, 14);
}

function axes(top = 30, bottom = 416) {
  const v = range(11, i => ln(RED, `M${col(i)} ${top + 40}V345`, 4, '30 4 5 4'));
  const h = each(rows, t => ln(RED, `M88 ${t}H752`, 3, '26 4 5 4'));
  const dims = ln(GRAY, `M88 ${top + 12}H750M88 ${top + 21}H750M88 ${bottom - 20}H750M88 ${bottom - 10}H750`, 4) +
    ln(WH, `M120 ${top + 16}H745M120 ${bottom - 15}H745`, 4, '7 25') +
    range(11, i => ln(GRAY, `M${col(i)} ${top}v42M${col(i)} 362V${bottom}`, 4) +
      `<circle fill="${WH}" cx="${col(i)}" cy="${top}" r="6"/><circle fill="${WH}" cx="${col(i)}" cy="${bottom}" r="6"/>`);
  const sides = each(rows, t => ln(GRAY, `M42 ${t}H88M755 ${t}H795`, 4) +
    `<circle fill="${WH}" cx="42" cy="${t}" r="6"/><circle fill="${WH}" cx="795" cy="${t}" r="6"/>`) +
    ln(GRAY, 'M52 108V350M60 108V350M68 180V350M768 108V350M780 108V350', 4) +
    ln(WH, 'M56 120V345M774 120V345', 5, '6 12');
  return v + h + dims + sides;
}

function walls() {
  return ln(GRAY, 'M80 158V362M88 158V362M80 354H757M80 363H757M749 100V362M757 100V362', 4) +
    ln(GRAY, 'M88 240H752M88 266H752', 5, '44 5 12 4') + ln(WH, 'M95 244H745M100 263H740', 3, '6 17') +
    ln(GRAY, 'M80 157H600M80 165H600', 4) + ln(WH, 'M90 153H560M90 168H600', 3, '8 22') +
    ln(GRAY, 'M146 270v85M180 270v85M208 270v85M240 270v85', 5) +
    ln(GRAY, 'M150 275h26v18h-26zM150 300h26v18h-26zM150 325h26v18h-26zM212 275h24v18h-24zM212 300h24v18h-24zM212 325h24v18h-24z', 4) +
    noise(GRAY, 90, 90, 168, 655, 182, 12) + noise(WH, 60, 90, 160, 650, 190, 7);
}

function northArrow(y = 52) {
  return `<circle fill="none" stroke="${WH}" stroke-width="3" cx="799" cy="${y}" r="11"/>` + ln(WH, `M799 ${y - 16}v32`);
}

// ground floor has the entrance canopy and the hatched annex
function groundFloor() {
  return ln(GRAY, 'M490 158V150H545V125H597V150H668V98H752M677 150V105H745V98M160 95H245M160 85V160M168 95V160M237 95V160M245 85V160M165 87L200 82L245 87', 5) +
    ln(GRAY, 'M139 168v72M170 168v72M233 168v72M300 168v72M360 168v72M427 168v72M490 168v72M520 168v72M545 150v210M597 150v210M625 190v60M690 190v60M600 190h90M600 215h90M625 230h65M640 170v60M658 190v60', 4) +
    ln(YE, 'M130 105q-20 20-25 38M150 112q-14 20-12 48M140 108q-16 22-18 46M118 120l30 12M108 138l40 12M102 148l45 12M275 105q18 20 18 38M256 112q12 20 12 46M266 108q14 22 14 42M250 118l26-14M252 135l36-12M250 152l42-12', 4) +
    noise(WH, 44, 145, 75, 125, 85, 7) +
    '<defs><pattern id="hatch" width="9" height="9" patternUnits="userSpaceOnUse"><path stroke="#b8b0b0" stroke-width="2" d="M0 9L9 0"/></pattern></defs>' +
    `<path fill="url(#hatch)" stroke="${GRAY}" stroke-width="4" d="M597 328h63v-26h95v55H597z"/>` +
    ln(GRAY, 'M170 362v20h62v-20M580 362v35h32v-35', 4) + ln(YE, 'M172 358v26M234 358v26', 5) +
    noise(WH, 36, 600, 150, 85, 90, 7) + ln(WH, 'M768 112v230', 8, '5 6');
}

// standard upper floor
function upperFloor() {
  return ln(GRAY, 'M135 165V85H266V165M143 160V93H258V160M671 158V100H757M679 158V105M679 125H757M679 140H757M600 158H679', 5) +
    range(9, i => ln(GRAY, `M${130 + i * 64} 168v72M${364 + i * 44} 270v75`, 5)) +
    ln(GRAY, 'M364 268H740M390 330H740M364 345H740', 5) +
    range(8, i => bx(GRAY, 378 + i * 44, 286, 20, 9) + noise(WH, 3, 378 + i * 44, 286, 16, 6, 5)) +
    range(9, i => bx(GRAY, 110 + i * 66, 208, 18, 8) + noise(WH, 3, 110 + i * 66, 208, 16, 5, 5)) +
    ln(GRAY, 'M264 172h30v50h-30zM272 172v60M280 172v60M288 172v60M640 175h50v58h-50zM640 188h50M640 200h50M640 212h50M640 224h50M200 176h30v18h-30z', 4) +
    ln(YE, 'M299 315v-16l12-6v26M325 270v46', 5) + bx('#9b995c', 318, 272, 16, 40) +
    noise(YE, 18, 298, 272, 32, 45) + noise(WH, 20, 295, 270, 40, 80) +
    noise(WH, 44, 671, 92, 84, 60, 9) + ln(WH, 'M768 112v230M757 170v180', 8, '5 6') + ln(GRAY, 'M96 50v25M88 350v34H720M100 372h200', 5) +
    noise(WH, 30, 90, 366, 240, 8, 8) + noise(GRAY, 16, 675, 60, 78, 18, 3);
}

function schedule(x, y) {
  return bx(GN, x, y, 166, 62) + ln('#0b5a14', `M${x + 4} ${y + 10}h160M${x + 4} ${y + 20}h160M${x + 4} ${y + 31}h160M${x + 4} ${y + 41}h160M${x + 4} ${y + 52}h160`, 3, '10 5 22 3 6 8') +
    ln('#11721a', `M${x + 28} ${y}v62M${x + 50} ${y}v62M${x + 78} ${y}v62M${x + 122} ${y}v62M${x + 144} ${y}v62`, 2, '4 3') + noise('#0b5a14', 22, x + 4, y + 4, 150, 54, 6);
}

const caption = (x, y, c) => bx(WH, x, y, 66, 8) + bx(WH, x + 70, y + 2, 10, 6) + bx(c, x, y + 9, 82, 5);
const draw = (id, body) => { document.getElementById(id).innerHTML = body; };

// first floor: ventilation
draw('floor1', frame() + axes() + walls() + groundFloor() + northArrow() +
  ln(MG, 'M107 232V170H575V258', 10) + ln('#6d3690', 'M115 178H570', 4) + ln(GRAY, 'M110 165H560', 3, '20 6') +
  ln(CY, 'M92 253H560', 15) + ln('#1cb4c4', 'M92 250H560', 3) + ln('#8d7de0', 'M505 256H575', 7) +
  ln(CY, 'M135 175V335M500 180V250M565 185V240M228 346H555V270M410 345V270M435 345V270M228 245V208H250', 5) +
  range(14, i => ln(CY, `M${150 + i * 26} 248v-22`, 5) + noise(YE, 4, 140 + i * 27, 218, 14, 14)) +
  ln(WH, 'M150 212h18M180 210h18M205 212h20M310 222h24M345 222h24', 4) +
  ln(MG, 'M466 258V378H495M465 265H555', 8) + bx(MG, 472, 295, 24, 50) + noise(MG, 40, 466, 290, 38, 90) +
  ln(YE, 'M505 302h14v40h-14zM530 302h14v40h-14z', 5) + range(4, i => `<circle fill="${YE}" cx="${480 + i * 20}" cy="280" r="8"/>`) +
  noise(YE, 44, 120, 190, 440, 90, 4) + noise(WH, 30, 250, 275, 160, 40, 8) + fr(WH, 258, 275, 50, 22) + ln(WH, 'M340 275v20h60v-20M372 275v20', 4) +
  '<path fill="url(#hatch)" d="M298 270h26v75h-26z"/>' +
  caption(287, 439, GN) + titleBlock(714, 446));

// second floor: fan coils
draw('floor2', frame() + shift(2, -8, axes() + walls() + groundFloor() + northArrow() +
  ln('#9b18a0', 'M140 255H540', 11) + ln(MG, 'M140 255H540', 4) + ln(MG, 'M138 180V325M95 330H138M95 215H138M95 172H138M95 268H138', 8) +
  ln(WH, 'M105 175V345M128 178V340', 4, '8 14') +
  each([155, 178, 205, 222, 250, 315, 345, 378, 412, 445, 480], x => ln('#80158b', `M${x} 175V232`, 13) + ln(MG, `M${x} 170V238`, 4) + ln(WH, `M${x - 8} 170h18M${x + 9} 172v55`, 4)) +
  each([190, 245, 268, 290, 335, 368, 395, 418], x => ln('#80158b', `M${x} 278V335`, 14) + ln(MG, `M${x} 262V345`, 4) + ln(WH, `M${x - 8} 345h18M${x + 10} 285v55`, 4)) +
  ln('#80158b', 'M440 278H555M576 275V355', 15) + ln(MG, 'M440 278H555M576 275V355', 3) + ln('#80158b', 'M732 115V205', 20) + ln(MG, 'M732 115V200', 4) +
  ln(CY, 'M600 290H750M235 290V345M332 295V345M553 170V225', 7) +
  noise(YE, 90, 130, 225, 420, 60, 5) + noise(MG, 90, 220, 235, 220, 60, 8) + noise(WH, 70, 120, 225, 440, 60, 5) + noise(GN, 10, 715, 110, 6, 105) +
  ln(WH, 'M448 310H540M448 295v17M478 295v17M510 295v17M540 295v17', 4) + bx(WH, 565, 136, 24, 12) + bx(WH, 765, 196, 24, 12) + bx(WH, 765, 265, 24, 12)) +
  schedule(45, 413) + schedule(219, 413) + caption(419, 426, '#28ab32') + titleBlock(714, 446));

// roof: air intake notes
const note = (x, t) => bx(YE, x, t, 42, 30) + noise('#b9b80f', 8, x, t, 38, 26) + noise(YE, 16, x - 5, t - 1, 54, 32) + bx(CY, x + 24, t + 38, 17, 9);
draw('roof', frame() + shift(26, 0, axes(45, 400) + walls() + upperFloor()) +
  note(186, 105) + note(482, 105) + note(544, 105) + note(599, 105) + note(50, 412) + note(472, 412) +
  ln(YE, 'M225 135L310 232M530 135L675 225M584 135L670 235M640 135L650 210L670 140M650 180L670 255M105 438L184 262L202 252M525 438L620 240L632 255', 5) +
  noise(YE, 16, 640, 180, 35, 75, 8) +
  bx(WH, 372, 429, 72, 8) + bx('#d5d119', 372, 440, 75, 6) + titleBlock(714, 446));

// third floor: riser runs
draw('floor3', frame() + shift(26, 0, axes(45, 400) + walls() + upperFloor()) +
  ln(CY, 'M118 232V192H147M588 186V167H768V205', 8) + ln(MG, 'M127 230V202H145M596 186V176H759V212', 9) +
  noise(YE, 8, 118, 180, 30, 12) + noise(YE, 9, 768, 190, 12, 100) + bx(WH, 272, 342, 32, 10) + ln(YE, 'M256 345v18', 5) +
  caption(293, 433, GN) + titleBlock(714, 446));

// fourth floor: wards
draw('floor4', frame() + shift(2, -11, axes(46, 401) + walls()) + shift(2, 0,
  ln(GRAY, 'M103 145H670M670 158V90H750V158M675 100h75M675 118h75', 5) + ln(WH, 'M110 139H540', 4, '12 14') +
  range(20, i => ln(GRAY, `M${245 + i * 25} 262v70`, 4)) + range(15, i => ln(GRAY, `M${140 + i * 40} 165v60`, 4)) +
  ln(GRAY, 'M262 172h30v50h-30zM270 172v50M280 172v50M622 178h60v50h-60zM622 192h60M622 206h60', 5) +
  ln('#8a1690', 'M103 236H745', 18) + ln(MG, 'M103 236H745', 7, '12 7 5 5') + ln(CY, 'M103 255H735', 7) + ln('#7c7ccf', 'M103 249H735', 3) +
  range(17, i => ln(MG, `M${130 + i * 36} 226v20`, 9) + noise(YE, 7, 125 + i * 36, 205, 14, 25) + noise(YE, 5, 130 + i * 36, 265, 10, 25) + noise(WH, 3, 125 + i * 36, 200, 20, 10)) +
  each([260, 328, 450, 522, 645, 715], x => ln(YE, `M${x} 262v50`, 8)) + ln(YE, 'M432 180v60', 8) +
  ln(CY, 'M250 320H470M510 320H730M148 180H210M445 180H600M112 175V250M738 185V248M675 118H745M230 190V250', 7) +
  noise(WH, 120, 240, 300, 500, 30, 6) + noise(CY, 60, 245, 310, 480, 20, 5) + noise(CY, 28, 130, 170, 470, 20, 6) +
  noise(YE, 50, 120, 160, 620, 40, 5) + ln(MG, 'M185 270v50M112 180v60M735 170v35', 10) + noise(YE, 30, 110, 165, 30, 60) + noise(YE, 24, 700, 155, 55, 80) +
  noise(WH, 34, 670, 85, 75, 60) + ln(GRAY, 'M103 350H745M103 372H745', 4) + ln(WH, 'M103 360H745', 16, '4 9') +
  bx(WH, 65, 155, 26, 12) + bx(WH, 180, 142, 26, 12) + bx(WH, 562, 142, 26, 12) + bx(WH, 640, 98, 26, 12) + bx(WH, 758, 158, 24, 12)) +
  schedule(83, 409) + schedule(257, 409) + bx(WH, 479, 421, 50, 8) + bx(WH, 532, 424, 12, 6) + bx('#28ab32', 479, 430, 66, 5) + titleBlock(714, 446));

// cover page
draw('cover', fr('#d5d6d8', 2, 2, 173, 236, 4) +
  ln(WH, 'M26 29H155M26 45H155M28 130H155M30 228H155', 4) + ln(WH, 'M50 52h100M50 64h100', 4, '10 5 14 3') +
  ln(GN, 'M68 52h22M110 52h22M68 64h22M110 64h22', 4, '6 3') + ln(WH, 'M30 80h120M30 93h120', 4, '22 12 60 4') +
  ln(GRAY, 'M65 84h84M65 97h84') + bx(WH, 72, 121, 28, 7) + ln(WH, 'M70 134h34', 6) +
  ln(WH, range(10, i => `M28 ${143 + i * 9}H155`), 4) + ln(WH, 'M28 135V228M50 140V228M126 140V228M137 140V228', 4) + bx(WH, 55, 150, 25, 60) + bx(WH, 28, 140, 20, 12));

// riser diagram
const risers = [147, 192, 244, 297, 352, 407];
const floors = [137, 157, 172, 191, 209, 230, 247, 267, 287, 306, 330, 355, 380, 405, 431, 458];
draw('riser', fr('#d5d6d8', 28, 46, 597, 491, 5) + fr(WH, 38, 54, 580, 474, 4) +
  floors.map((t, n) => ln(RED, `M103 ${t}H430`, 3) + bx(WH, 101, t - 8, 13, 5) +
    each(risers, (x, i) => (i + n) % 4 === 3 ? '' : ln(WH, `M${x + 3} ${t - 5}h11`, 5, '6 1'))).join('') +
  risers.map((x, i) => ln(CY, `M${x} 124V458M${x - 34} 124h34`, 4) + ln(CY, `M${x - 30} 100h26`, 4) + ln(WH, `M${x - 28} 103h26`, 5) +
    (i > 1 ? bx(i % 2 ? GRAY : WH, x - 18, 104, 16, 12) + bx(GN, x - 15, 120, 9, 12) : '') + bx('#e07c80', x - 26, 121, 9, 12) + noise(WH, 9, x - 35, 118, 20, 20) +
    ln(WH, `M${x + 4} ${i % 3 === 2 ? 378 : 402}l14 16`, 5)).join('') +
  bx(WH, 277, 489, 97, 12) + bx('#d5d6d8', 259, 505, 123, 6) + titleBlock(489, 490, 129));

// water system diagram
const unitRow = (t, n) => ln(CY, `M880 ${t + 12}H1240M890 ${t + 19}H970M980 ${t + 19}H1220`, 4) +
  range(n, i => (i === 5 || i === 6) ? '' : ln(CY, `M${903 + i * 15} ${t + 2}v12`, 3) + bx(WH, 896 + i * 15, t - 4, 9, 6)) +
  range(n - 9, i => ln(CY, `M${985 + i * 17} ${t + 16}v12`, 3) + bx(WH, 978 + i * 17, t + 24, 9, 7)) + bx(WH, 897, t + 24, 9, 7) + bx(WH, 937, t + 24, 9, 7);
const coil = (x, t, flip) => ln(MG, `M${x - 26} ${t}h52`, 3) + bx(GN, x - (flip ? 22 : 4), t - 6, 26, 11) + bx('#d776a6', x - (flip ? -8 : 20), t - 8, 14, 14) + noise(WH, 6, x - 25, t - 12, 45, 22) + ln(MG, `M${x - 16} ${t}l-8 14`, 4);
draw('system', fr('#a9a9a9', 761, 34, 758, 490, 5) + fr(WH, 780, 41, 732, 475, 4) + bx(STRIP, 765, 40, 11, 128) +
  ln(RED, 'M796 100H1365M796 148H1365M796 190H1365M796 227H1365M796 262H1365M796 310H1365', 3) +
  unitRow(112, 23) + unitRow(157, 23) + unitRow(199, 23) + unitRow(277, 18) +
  ln(CY, 'M863 130V314H1266V130M870 130V320H1272V130M878 120V345M884 240V345H880M1254 95V320M1247 240V320', 4) + ln('#0f9da3', 'M860 318H1270M1042 310V416', 4) +
  ln(MG, 'M803 125V330H1352V415H1112V440M809 125V290M1334 125V330M1328 125V290M980 234H1238V320M1231 236V320', 5) +
  each([131, 174, 218, 250, 282], t => coil(838, t, false) + coil(1294, t, true)) +
  range(4, i => fr('#a98a50', 917 + i * 38, 240, 25, 14, 3) + bx(GN, 925 + i * 38, 242, 13, 11)) +
  ln(CY, 'M790 355H845V380H908V355H1042V418H965M790 355V513H850V402M850 480H975V440M790 460H850M790 477H850M790 494H850', 3) +
  '<path fill="#23c45d" d="M876 350l26 32h-52z"/>' + ln('#d77a7c', 'M795 410V388H970M853 452H952V410H853zM795 410h50', 3) + fr(WH, 972, 376, 18, 12, 3) +
  each([460, 477, 494, 508], t => ln(GN, `M793 ${t - 5}h54M800 ${t}h42`, 3) + bx(GN, 813, t - 5, 16, 9)) +
  ln(GN, 'M855 409Q902 395 950 409Q902 422 855 409M855 447Q902 434 950 447Q902 460 855 447M797 394h48M797 404h48', 4) +
  ln(GN, 'M880 409h44M880 447h44', 5) + bx(GN, 1043, 362, 12, 25) + bx('#83a72a', 932, 341, 25, 11) + noise(WH, 34, 958, 418, 26, 56, 6) + ln(WH, 'M963 425V480M972 425V485M981 425V480', 4) +
  bx('#ec8585', 986, 475, 54, 34) + ln('#b73d3d', 'M986 482h54M986 490h54M986 498h54', 2, '6 3') + ln(MG, 'M962 485V496H986M1040 495H1062V440H1046V475M1085 480H1112V440H1085', 4) +
  ln(WH, 'M1062 450l20 34M1082 450l-20 34', 6) + noise(WH, 22, 1055, 448, 28, 36) + ln(WH, 'M1046 414h80', 3, '10 5') +
  noise(MG, 28, 1195, 62, 40, 28, 7) + noise(GRAY, 24, 1180, 62, 72, 24, 8) + noise(GN, 8, 1212, 62, 22, 18, 8) + ln(MG, 'M1210 92h44V110', 3) +
  ln(WH, 'M1346 140h14M1342 184h30M1346 220h14M1346 254h14M1348 304h8', 6, '6 2') +
  ln('#d77a7c', 'M1352 328H1376V350H1410', 3) + ln(WH, 'M1360 325l16-15h16M1380 328h14', 5) +
  ln(YE, range(38, i => `M1412 ${140 + i * 8.2}H1492`), 3) +
  ln(WH, 'M1429 138V450', 22, '4 5') + noise('#ec72c4', 60, 1455, 140, 22, 240, 8) + noise(GN, 18, 1455, 340, 22, 80, 8) + noise(WH, 40, 1455, 150, 22, 290, 5) +
  ln(YE, 'M1412 136H1492V451H1412zM1449 136V451M1478 136V451', 4) +
  ln(WH, 'M1440 126l6-8 3 8M1452 126l6-8 3 8M1440 129h22', 4) +
  ln(WH, 'M1148 471H1206', 5, '5 2') + ln(GRAY, 'M1134 478H1232', 4) + titleBlock(1382, 478, 129));

// equipment tables
const sheetTable = (x, t) => bx('#e6e6e6', x, t + 2, 42, 63) + bx(WH, x + 12, t - 2, 19, 4) + ln('#222830', `M${x + 12} ${t - 1.5}h19`, 1, '2 3') +
  ln('#4a5058', range(15, i => `M${x} ${t + 6.5 + i * 4}h42`), 1, '5 2 9 3 3 6') + ln('#3a4048', `M${x + 6.500} ${t + 5}v60M${x + 17.500} ${t + 5}v60M${x + 35.500} ${t + 5}v60`, 1, '2 2') +
  range(40, () => bx('#3a4048', Math.round(x + 2 + rnd() * 38), Math.round(t + 5 + rnd() * 58), 2, 1));
draw('tables', fr('#d3686b', 1, 1, 232, 175, 2) + fr('#d3686b', 7, 4, 223, 169, 2) + bx('#d3686b', 2, 3, 5, 43) +
  ln('#7d454b', 'M4.500 5V46', 1, '3 2') + sheetTable(26, 15) + sheetTable(76, 15) + sheetTable(125, 15) + sheetTable(26, 93));
```
